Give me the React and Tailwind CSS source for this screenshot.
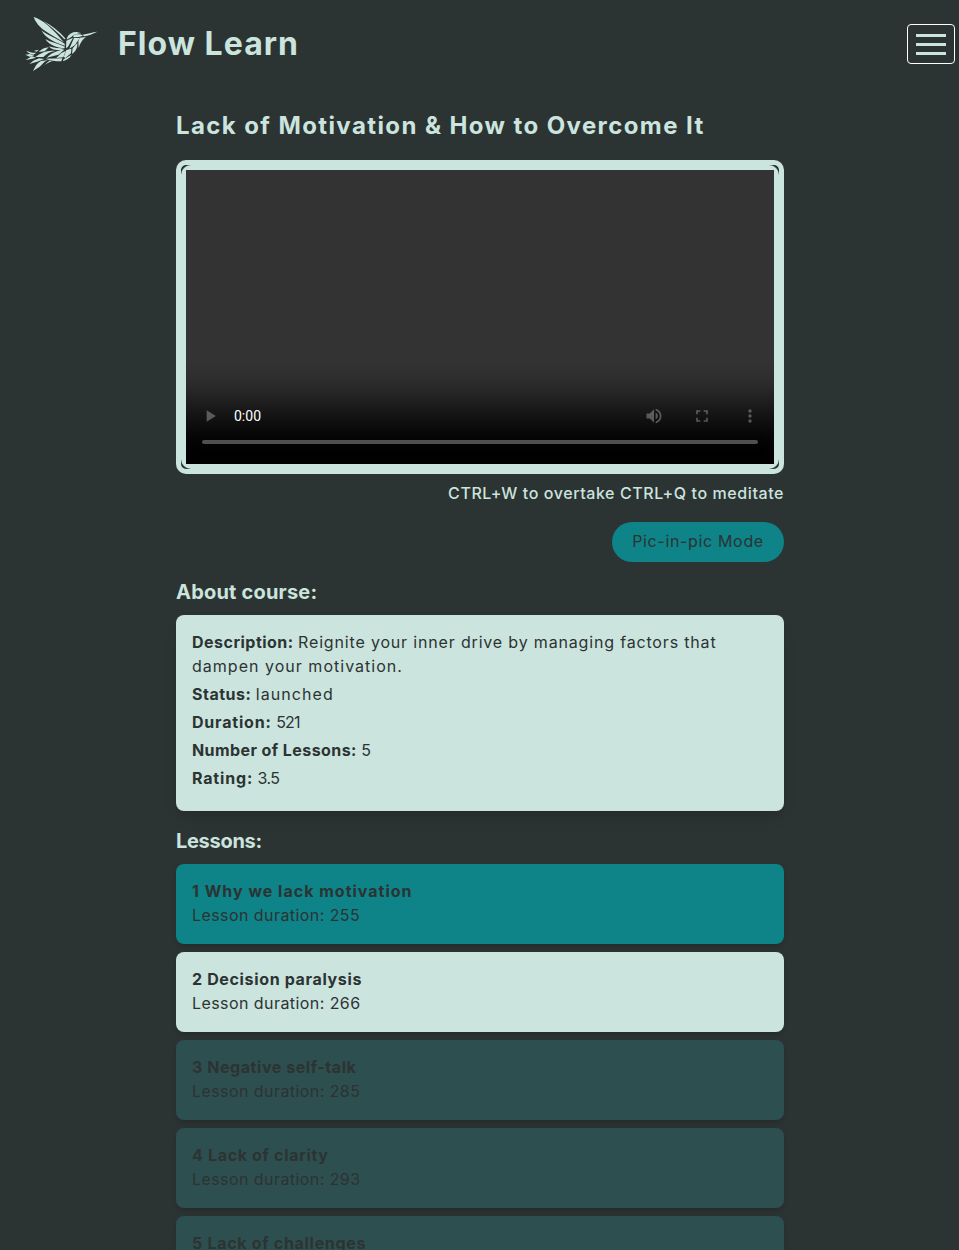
import React from "react";

const details = [
  { label: "Status:", value: "launched", labelClass: "tracking-[0.5px]", valueClass: "tracking-[1.05px]" },
  { label: "Duration:", value: "521", labelClass: "tracking-[0.8px]", valueClass: "tracking-[-0.8px]" },
  { label: "Number of Lessons:", value: "5", labelClass: "tracking-[0.42px]", valueClass: "" },
  { label: "Rating:", value: "3.5", labelClass: "tracking-[0.82px]", valueClass: "tracking-[-0.6px]" },
];

const lessons = [
  { title: "1 Why we lack motivation", duration: 255, card: "bg-[#0e8388]", track: "tracking-[1px]" },
  { title: "2 Decision paralysis", duration: 266, card: "bg-[#cbe4de]", track: "tracking-[0.65px]" },
  { title: "3 Negative self-talk", duration: 285, card: "bg-[#2e4f4f]", track: "tracking-[0.56px]" },
  { title: "4 Lack of clarity", duration: 293, card: "bg-[#2e4f4f]", track: "tracking-[0.67px]" },
  { title: "5 Lack of challenges", duration: 310, card: "bg-[#2e4f4f]", track: "tracking-[0.7px]" },
];

function Hummingbird() {
  return (
    <svg viewBox="0 0 300 225" className="mb-1 h-[75px] w-[100px] shrink-0" fill="#cbe4de">
      <path d="M56 36 C74 42 92 54 103 65 C117 78 130 91 147 112 C128 101 108 90 92 79 C74 67 63 54 56 36Z" />
      <path d="M86 48 C108 60 132 79 152 101 L148 103 C130 83 108 66 86 48Z" />
      <path d="M79 76 C96 90 121 99 149 116 L150 122 C127 116 94 103 79 76Z" />
      <path d="M91 102 C107 112 128 115 150 125 L148 130 C126 128 103 121 91 102Z" />
      <path d="M101 124 C116 130 132 129 149 132 L136 136 C122 136 109 133 101 124Z" />
      <path d="M157 97 C162 86 174 80 185 81 L199 85 C187 86 176 88 170 95 L155 104Z" />
      <path d="M174 92 C182 87 196 86 204 92 L192 96 L176 97Z" />
      <path d="M203 89 C218 86 232 82 247 80 C234 87 219 92 207 94Z" />
      <path d="M194 98 L213 96 C204 102 200 109 195 118 L191 129 L190 109Z" />
      <path d="M154 107 L174 98 L159 125 L153 130Z" />
      <path d="M177 99 L194 99 L180 120 L163 131Z" />
      <path d="M187 114 C188 130 181 140 171 147 L173 130Z" />
      <path d="M154 135 L169 131 L168 145 L150 160 L147 154Z" />
      <path d="M170 149 C163 160 155 165 143 168 L146 163Z" />
      <path d="M152 138 L145 157 L124 159 L138 145Z" />
      <path d="M148 134 L130 149 L95 158 C107 145 124 136 148 134Z" />
      <path d="M101 127 L89 139 L71 141 C80 132 89 128 101 127Z" />
      <path d="M121 138 C105 140 94 147 85 156 L61 156 C79 142 99 134 121 138Z" />
      <path d="M142 160 L139 169 C121 169 104 167 91 161Z" />
      <path d="M99 166 C87 169 83 178 73 186 L54 198 C60 185 66 174 78 168Z" />
      <path d="M103 167 L112 168 C102 172 92 177 85 183Z" />
      <path d="M72 160 L88 162 L66 170 L43 177 L55 167Z" />
      <path d="M34 137 C44 141 52 144 64 143 L55 149 C45 147 39 143 34 137Z" />
      <path d="M31 149 L45 147 L58 153 L44 155Z" />
      <path d="M50 154 L63 158 L48 162 L32 165 L43 158Z" />
      <path d="M57 137 L71 134 L65 140Z" />
    </svg>
  );
}

export default function App() {
  return (
    <div className="h-[1250px] overflow-hidden bg-[#2c3333] font-['Inter',sans-serif] text-base text-[#2c3333]">
      <header className="flex h-[88px] items-center justify-between pr-1 pl-[15px]">
        <div className="flex items-center">
          <Hummingbird />
          <h1 className="pl-[3px] text-[32px] leading-10 font-bold tracking-[1.04px] text-[#cbe4de]">Flow Learn</h1>
        </div>
        <button aria-label="Menu" className="flex h-10 w-12 flex-col items-center justify-center gap-1.5 rounded border border-white">
          <span className="h-[3px] w-[30px] bg-[#cbe4de]" />
          <span className="h-[3px] w-[30px] bg-[#cbe4de]" />
          <span className="h-[3px] w-[30px] bg-[#cbe4de]" />
        </button>
      </header>

      <main className="ml-44 w-[608px] pt-[22px]">
        <h2 className="text-2xl font-bold tracking-[1.4px] whitespace-nowrap text-[#cbe4de]">
          Lack of Motivation &amp; How to Overcome It
        </h2>
        <div className="mt-[18px] h-[314px] rounded-[10px] border-[5px] border-[#cbe4de]">
          <div className="h-[304px] rounded-[10px] border-[5px] border-[#cbe4de]">
            <video controls className="h-[294px] w-full" />
          </div>
        </div>
        <p className="mt-[7px] text-right font-medium tracking-[0.58px] text-[#cbe4de]">
          CTRL+W to overtake CTRL+Q to meditate
        </p>
        <div className="mt-[17px] flex justify-end">
          <button className="h-10 w-[172px] rounded-full bg-[#0e8388] pb-0.5 tracking-[0.66px]">Pic-in-pic Mode</button>
        </div>

        <h3 className="mt-4 text-xl font-bold tracking-[0.2px] text-[#cbe4de]">About course:</h3>
        <section className="mt-[9px] rounded-lg bg-[#cbe4de] px-4 pt-[15px] pb-[17px] shadow-lg">
          <p className="mb-1">
            <b className="tracking-[0.48px]">Description:</b>{" "}
            <span className="tracking-[0.83px]">
              Reignite your inner drive by managing factors that
              <br />
              <span className="tracking-[1.02px]">dampen your motivation.</span>
            </span>
          </p>
          {details.map((d) => (
            <p key={d.label} className="mb-1">
              <b className={d.labelClass}>{d.label}</b> <span className={d.valueClass}>{d.value}</span>
            </p>
          ))}
        </section>

        <h3 className="mt-4 text-xl font-bold tracking-[-0.3px] text-[#cbe4de]">Lessons:</h3>
        <ul className="mt-[9px] flex flex-col gap-2">
          {lessons.map((l) => (
            <li key={l.title} className={`rounded-lg px-4 pt-[15px] pb-[17px] shadow-md ${l.card}`}>
              <h4 className={`font-bold ${l.track}`}>{l.title}</h4>
              <p className="tracking-[0.43px]">Lesson duration: {l.duration}</p>
            </li>
          ))}
        </ul>
      </main>
    </div>
  );
}
